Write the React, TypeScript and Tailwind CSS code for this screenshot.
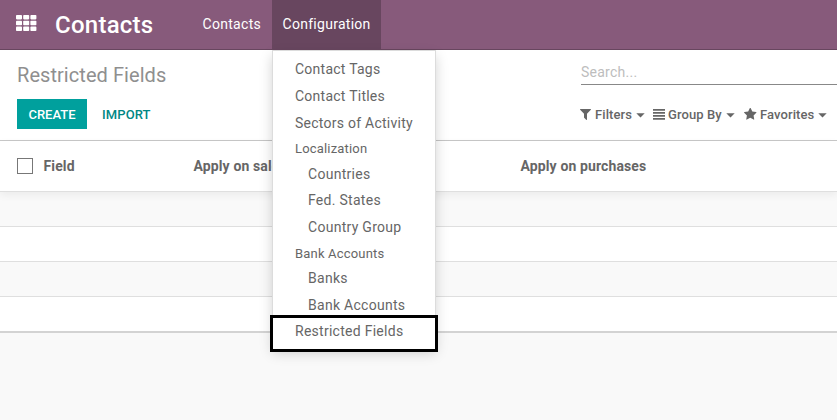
import React from "react";

type MenuEntry = { label: string; row: string; kind: "item" | "header" | "child" };

const menu: MenuEntry[] = [
  { label: "Contact Tags", row: "h-[27px]", kind: "item" },
  { label: "Contact Titles", row: "h-[27px]", kind: "item" },
  { label: "Sectors of Activity", row: "h-[27px]", kind: "item" },
  { label: "Localization", row: "h-[24px]", kind: "header" },
  { label: "Countries", row: "h-[26px]", kind: "child" },
  { label: "Fed. States", row: "h-[27px]", kind: "child" },
  { label: "Country Group", row: "h-[27px]", kind: "child" },
  { label: "Bank Accounts", row: "h-[25px]", kind: "header" },
  { label: "Banks", row: "h-[25px]", kind: "child" },
  { label: "Bank Accounts", row: "h-[28px]", kind: "child" },
];

const kindClass = {
  item: "pl-[22px] text-[14px] tracking-[0.25px]",
  header: "pl-[22px] text-[13px] tracking-[0.18px]",
  child: "pl-[35px] text-[14px] tracking-[0.28px]",
};

function AppsIcon() {
  return (
    <svg width="21" height="16" viewBox="0 0 21 16" fill="#fff" className="mb-[3px] shrink-0">
      {[0, 5.8, 11.6].map((y) =>
        [0, 7.2, 14.4].map((x) => <rect key={`${x}-${y}`} x={x} y={y} width="6" height="4.4" rx="0.8" />)
      )}
    </svg>
  );
}

function FilterIcon() {
  return (
    <svg width="11" height="11" viewBox="190 256 1412 1408" fill="currentColor" className="-mt-px">
      <path d="M1595 295q17 41-14 70l-493 493v742q0 42-39 59-13 5-25 5-27 0-45-19l-256-256q-19-19-19-45v-486L211 365q-31-29-14-70 17-39 59-39h1280q42 0 59 39z" />
    </svg>
  );
}

function LinesIcon() {
  return (
    <svg width="12" height="11" viewBox="0 0 12 11" fill="currentColor" className="-ml-[0.5px] -mt-px">
      <path d="M0 0.1h12v1.6H0zM0 3.1h12v1.6H0zM0 6.1h12v1.6H0zM0 9.1h12v1.6H0z" />
    </svg>
  );
}

function StarIcon() {
  return (
    <svg width="12.5" height="12.5" viewBox="64 64 1664 1664" fill="currentColor" className="-ml-[1px] -mt-px">
      <path d="M1728 647q0 22-26 48l-363 354 86 500q1 7 1 20 0 21-10.5 35.5t-30.5 14.5q-19 0-40-12l-449-236-449 236q-22 12-40 12-21 0-31.5-14.5t-10.5-35.5q0-6 2-20l86-500-364-354q-25-27-25-48 0-37 56-46l502-73 225-455q19-41 49-41t49 41l225 455 502 73q56 9 56 46z" />
    </svg>
  );
}

function Caret() {
  return (
    <svg width="9" height="5" viewBox="0 0 9 5" fill="currentColor" className="mt-px">
      <path d="M0.3 0.2h8.4L4.5 4.5z" />
    </svg>
  );
}

function SearchOption({ icon, label, className }: { icon: React.ReactNode; label: string; className: string }) {
  return (
    <button className={`flex items-center ${className}`}>
      <span className="flex w-[15px] shrink-0">{icon}</span>
      <span className="mr-[4px] whitespace-nowrap tracking-[0.1px]">{label}</span>
      <Caret />
    </button>
  );
}

function ConfigurationMenu() {
  return (
    <div className="absolute left-0 top-[50px] z-10 h-[297px] w-[164px] border border-[#dcdcdc] bg-white pt-[5px] text-[#666] shadow-[0_6px_12px_rgba(0,0,0,0.175)]">
      {menu.map((entry, i) => (
        <div key={i} className={`flex items-center whitespace-nowrap ${entry.row} ${kindClass[entry.kind]}`}>
          {entry.label}
        </div>
      ))}
      <div className="-ml-[3px] -mt-[4px] flex h-[37px] w-[168px] items-start border-[3px] border-black bg-white pl-[22px] pt-[3px] text-[14px] leading-[20px] tracking-[0.27px] whitespace-nowrap">
        Restricted Fields
      </div>
    </div>
  );
}

export default function App() {
  return (
    <div className="h-[420px] w-[837px] overflow-hidden bg-[#f9f9f9] font-['Roboto','Noto_Sans',sans-serif] text-[#666]">
      <nav className="flex h-[50px] border-b border-[#68465f] bg-[#875a7b] text-white">
        <div className="flex w-[192px] items-center pl-[16px]">
          <AppsIcon />
          <span className="ml-[18px] text-[24px] font-medium leading-none tracking-[0.25px]">Contacts</span>
        </div>
        <div className="flex w-[80px] items-center pl-[10.5px] text-[14px] tracking-[0.3px]">Contacts</div>
        <div className="relative w-[109px]">
          <div className="flex h-[49px] items-center bg-[#68465f] pl-[10.5px] text-[14px] tracking-[0.28px]">Configuration</div>
          <ConfigurationMenu />
        </div>
      </nav>

      <header className="flex h-[91px] justify-between border-b border-[#c8c8c8] bg-white">
        <div className="pl-[17px] pt-[13px]">
          <h1 className="text-[20px] leading-[24px] tracking-[0.06px] text-[#8f8f8f]">Restricted Fields</h1>
          <div className="mt-[12px] flex text-[13px] font-medium">
            <button className="h-[30px] w-[70px] bg-[#00a09d] pt-px text-white">CREATE</button>
            <button className="h-[30px] pl-[15px] pt-px tracking-[0.1px] text-[#008784]">IMPORT</button>
          </div>
        </div>
        <div className="w-[256px]">
          <div className="h-[35px] border-b border-[#888] pt-[12px] text-[14px] leading-[20px] tracking-[0.25px] text-[#bdbdbd]">Search...</div>
          <div className="mt-[20px] flex h-[20px] items-center text-[13px] font-medium">
            <SearchOption icon={<FilterIcon />} label="Filters" className="-ml-[1px] w-[73px]" />
            <SearchOption icon={<LinesIcon />} label="Group By" className="w-[92px]" />
            <SearchOption icon={<StarIcon />} label="Favorites" className="w-[90px]" />
          </div>
        </div>
      </header>

      <section>
        <div className="relative flex h-[51px] items-center border-b border-[#dfdfdf] bg-white pl-[17px] text-[14px] font-bold tracking-[0.12px] shadow-[0_3px_8px_rgba(0,0,0,0.06)]">
          <span className="h-[16px] w-[16px] border border-[#777] bg-white" />
          <span className="ml-[10.5px] w-[150px]">Field</span>
          <span className="w-[327px]">Apply on sales</span>
          <span>Apply on purchases</span>
        </div>
        <div className="h-[35px] border-b border-[#dfdfdf]" />
        <div className="h-[35px] border-b border-[#dfdfdf] bg-white" />
        <div className="h-[35px] border-b border-[#dfdfdf]" />
        <div className="h-[36px] border-b-2 border-[#d3d3d3] bg-white" />
      </section>
    </div>
  );
}
